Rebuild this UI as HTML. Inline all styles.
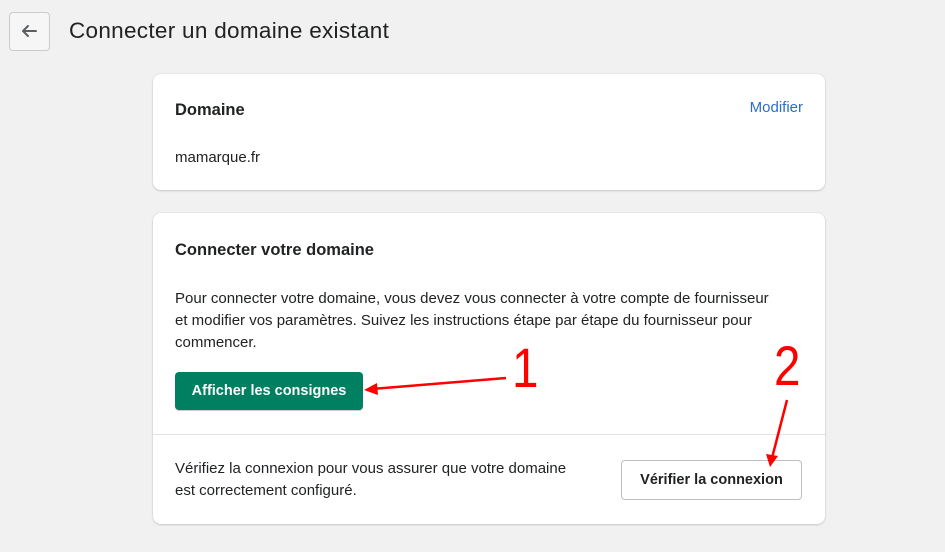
<!DOCTYPE html>
<html><head><meta charset="utf-8"><style>
body{margin:0;width:945px;height:552px;background:#f1f1f1;font-family:"Liberation Sans",sans-serif;color:#202223;position:relative;overflow:hidden}
.abs{position:absolute}
.card{position:absolute;left:153px;width:672px;background:#fff;border-radius:8px;box-shadow:0 1px 2px rgba(0,0,0,.15),0 0 0 1px rgba(63,63,68,.04)}
.t{font-size:15px;letter-spacing:0px;white-space:nowrap}
</style></head><body>
<div class="abs" style="left:9px;top:12px;width:39px;height:37px;border:1px solid #c9cccf;border-radius:4px;background:#f6f6f7"></div>
<svg class="abs" style="left:19px;top:21px" width="20" height="20" viewBox="0 0 20 20"><path d="M17 10H4M9 5L4 10L9 15" fill="none" stroke="#5c5f62" stroke-width="2" stroke-linecap="round" stroke-linejoin="round"/></svg>
<div class="abs" style="left:69px;top:18px;font-size:22.5px;letter-spacing:0.3px">Connecter un domaine existant</div>

<div class="card" style="top:74px;height:116px">
<div class="abs" style="left:22px;top:27px;font-size:16.5px;font-weight:bold">Domaine</div>
<div class="abs t" style="right:22px;top:25px;color:#2c6ecb">Modifier</div>
<div class="abs t" style="left:22px;top:75px">mamarque.fr</div>
</div>

<div class="card" style="top:213px;height:311px">
<div class="abs" style="left:22px;top:28px;font-size:16.5px;font-weight:bold">Connecter votre domaine</div>
<div class="abs t" style="left:22px;top:75px;line-height:22px">Pour connecter votre domaine, vous devez vous connecter à votre compte de fournisseur<br>et modifier vos paramètres. Suivez les instructions étape par étape du fournisseur pour<br>commencer.</div>
<div class="abs" style="left:22px;top:159px;width:188px;height:38px;background:#008060;border-radius:4px;color:#fff;font-weight:bold;font-size:14.5px;line-height:38px;text-align:center;box-shadow:0 1px 0 rgba(0,0,0,.2)">Afficher les consignes</div>
<div class="abs" style="left:0;top:221px;width:672px;height:1px;background:#e1e3e5"></div>
<div class="abs t" style="left:22px;top:245px;line-height:22px">Vérifiez la connexion pour vous assurer que votre domaine<br>est correctement configuré.</div>
<div class="abs" style="left:468px;top:247px;width:179px;height:38px;border:1px solid #babfc3;border-radius:4px;font-weight:bold;font-size:14.5px;line-height:38px;text-align:center;color:#202223">Vérifier la connexion</div>
</div>

<div class="abs" style="left:512px;top:338px;font-size:56px;color:#f00;line-height:60px;transform:scaleX(0.85);transform-origin:left">1</div>
<div class="abs" style="left:774px;top:336px;font-size:56px;color:#f00;line-height:60px;transform:scaleX(0.85);transform-origin:left">2</div>
<svg class="abs" style="left:0;top:0" width="945" height="552">
<g stroke="#f00" stroke-width="2.5" fill="#f00">
<line x1="506" y1="378" x2="372" y2="389"/>
<polygon points="364,390 377,383 378,395" stroke="none"/>
<line x1="787" y1="400" x2="772" y2="458"/>
<polygon points="770,467 766,454 778,456" stroke="none"/>
</g></svg>
</body></html>
